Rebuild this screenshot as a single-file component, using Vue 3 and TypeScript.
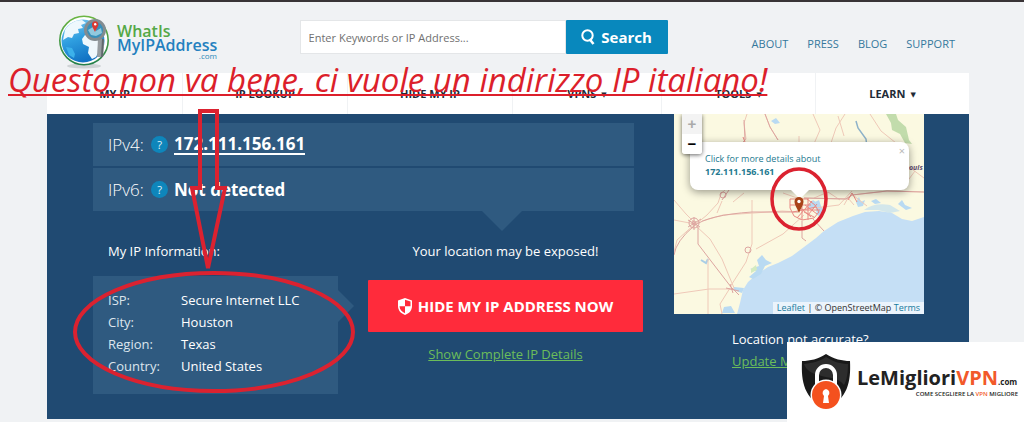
<script setup lang="ts">
interface NavItem { label: string; menu: boolean }
interface Detail { term: string; value: string }

const topLinks: string[] = ['About', 'Press', 'Blog', 'Support']
const navItems: NavItem[] = [
  { label: 'My IP', menu: false },
  { label: 'IP Lookup', menu: false },
  { label: 'Hide My IP', menu: false },
  { label: 'VPNs', menu: true },
  { label: 'Tools', menu: true },
  { label: 'Learn', menu: true },
]
const details: Detail[] = [
  { term: 'ISP:', value: 'Secure Internet LLC' },
  { term: 'City:', value: 'Houston' },
  { term: 'Region:', value: 'Texas' },
  { term: 'Country:', value: 'United States' },
]
const address = '172.111.156.161'
</script>

<template>
  <div class="page">
    <header class="header">
      <a href="#" class="logo" aria-label="WhatIsMyIPAddress.com">
        <svg class="globe" viewBox="0 0 54 54" aria-hidden="true">
          <defs>
            <linearGradient id="ocean" x1="0" y1="0" x2="0.4" y2="1">
              <stop offset="0" stop-color="#8fd0f2" />
              <stop offset="0.5" stop-color="#2f9fe0" />
              <stop offset="1" stop-color="#1273c4" />
            </linearGradient>
            <linearGradient id="ring" x1="0" y1="0" x2="0" y2="1">
              <stop offset="0" stop-color="#6cb644" />
              <stop offset="1" stop-color="#23804a" />
            </linearGradient>
          </defs>
          <ellipse cx="26" cy="51" rx="17" ry="2.5" fill="#cfd3d5" />
          <circle cx="26" cy="25.500" r="24.200" fill="#fff" stroke="url(#ring)" stroke-width="1.600" />
          <circle cx="25" cy="26" r="21.500" fill="url(#ocean)" />
          <path d="M7 15 C11 8 18 5 24 5 L28 8 23 10 25 13 20 14 21 18 16 19 14 23 10 22 5 25Z" fill="#eef8fd" />
          <path d="M27 20 L34 22 45 26 46 32 41 36 38 42 34 44 30 38 31 32 25 29 24 24Z" fill="#eef8fd" />
          <path d="M8 32 L14 33 17 39 16 43 11 40Z" fill="#3cb1ea" />
          <path d="M40 24 L46 24 45 42 39 42Z" fill="#969da1" />
          <path d="M44 24 L46 24 45 42 43 42Z" fill="#60686d" />
          <circle cx="37" cy="15" r="9.500" fill="#3790bb" stroke="#838c91" stroke-width="3" />
          <path d="M30 15 L35 12 38 16 43 13 44 18 38 21 33 20Z" fill="#91c9df" />
          <path d="M37 17 C35 13 33.500 11 34 8.500 A3.300 3.300 0 0 1 40.300 8.500 C41 11 38 14 37 17Z" fill="#d93a34" />
          <circle cx="37.200" cy="9.300" r="1.200" fill="#fff" />
        </svg>
        <span class="wordmark">
          <span class="green">WhatIs</span>
          <span class="blue">MyIPAddress</span>
          <span class="com">.com</span>
        </span>
      </a>
      <form class="search" role="search" @submit.prevent>
        <input type="search" aria-label="Enter keywords or IP address" placeholder="Enter Keywords or IP Address..." />
        <button type="submit">
          <svg viewBox="0 0 15 17" aria-hidden="true">
            <circle cx="6.500" cy="6.500" r="5.200" fill="none" stroke="#fff" stroke-width="2" />
            <path d="M8.500 10 L12.500 15" stroke="#fff" stroke-width="2.600" />
          </svg>
          Search
        </button>
      </form>
      <nav class="top-links" aria-label="Company">
        <a v-for="link in topLinks" :key="link" href="#">{{ link }}</a>
      </nav>
    </header>

    <nav class="main-nav" aria-label="Main">
      <a v-for="item in navItems" :key="item.label" href="#">
        {{ item.label }}<span v-if="item.menu" class="caret">▼</span>
      </a>
    </nav>

    <main class="content">
      <section class="info">
        <div class="addresses">
          <div class="address">
            <span class="version">IPv4:</span>
            <button class="help" type="button" aria-label="About IPv4">?</button>
            <a href="#">{{ address }}</a>
          </div>
          <div class="address">
            <span class="version">IPv6:</span>
            <button class="help" type="button" aria-label="About IPv6">?</button>
            <span>Not detected</span>
          </div>
        </div>
        <div class="columns">
          <div class="provider">
            <h2>My IP Information:</h2>
            <dl>
              <template v-for="row in details" :key="row.term">
                <dt>{{ row.term }}</dt>
                <dd>{{ row.value }}</dd>
              </template>
            </dl>
          </div>
          <div class="exposure">
            <p>Your location may be exposed!</p>
            <button class="hide" type="button">
              <svg viewBox="0 0 14 17" aria-hidden="true">
                <path d="M7 0 L14 2.500 V8 C14 12.500 11 15.500 7 17 C3 15.500 0 12.500 0 8 V2.500Z" fill="#fff" />
                <path d="M7 1.800 L12.500 3.600 V8.300 H7Z M7 8.300 V15.300 C4 14 1.700 11.800 1.500 8.300Z" fill="#ff2b3b" />
              </svg>
              HIDE MY IP ADDRESS NOW
            </button>
            <a href="#" class="green-link">Show Complete IP Details</a>
          </div>
        </div>
      </section>

      <section class="location">
        <div class="map">
          <svg class="tiles" viewBox="0 0 250 200" preserveAspectRatio="xMidYMid slice" aria-hidden="true">
            <rect width="250" height="200" fill="#fbf9e1" />
            <path d="M212 0 L222 0 224 6 232 13 235 26 238 30 231 29 226 20 218 16 217 9Z" fill="#c2dcac" />
            <path d="M63 200 L66 189 69 176 74 168 82 161 94 153 104 149 118 142 134 130 142 124 150 117 164 108 179 102 191 98 205 97 218 99 228 105 238 107 250 103 V200Z" fill="#c5dff5" />
            <g fill="#b9daf2">
              <path d="M190 96 Q200 88 216 91 L226 97 216 99 204 96Z" opacity="0.600" />
              <path d="M182 88 l3-5 2 5 4-2-2 6-5 1z M197 87 l5-2 5 4-6 1z M224 90 l4-4 3 5 7 3-6 2z M134 91 l5-5 4 3-3 6-5-1z" />
              <path d="M141 88 l4-2 2 6 3 5-2 6-5-2z" />
              <path d="M88 141 l4 5 6 3-7 3-4 8-8 5-4-2 7-6-6-2 9-3-2-6z M60 173 l10 1-2 5-9-3z M50 193 l7-1 4 7H48z M97 7l5-3 4 5-5 1z" />
              <path d="M182 7 l2 7 8 11 1 9" fill="none" stroke="#8eb2c9" stroke-width="1.500" />
              <path d="M27 146l5 3 2-4" fill="none" stroke="#a9cee6" stroke-width="2" />
            </g>
            <path d="M77 155 l5-4 1 5-6 3z" fill="#d4ebc0" />
            <g fill="none" stroke="#efc9b8" stroke-width="1">
              <path d="M73 0 L70 9 72 25 68 30 M91 0 L96 13 104 26 M139 0 L146 16 139 32 M171 0 L162 14 157 29 M196 0 L207 17 222 29 M125 22V31 M164 2L170 22" />
              <path d="M0 86 L12 100 22 110 33 101 44 89 47 80 52 75 M28 107 L49 101 80 99 108 97 124 98 M22 112 L36 125 48 145 60 174 M78 86V130L72 148 56 173 M82 135L109 120 130 101 M22 109 L3 126 0 138 M34 145V200 M0 180 L35 175 60 175 M48 87 L43 99 M59 88L70 79 M0 106L21 110" />
              <path d="M126 85 L109 79 M130 84 L172 85 178 81 213 77 250 78 M141 94 L165 91 178 77 M180 82L193 92 M170 91 L174 84 180 91M56 174L46 190 48 200M231 50L250 64 M232 69L241 57 M140 84 L154 78 166 86" />
            </g>
            <g fill="none" stroke="#dda5a0" stroke-width="1">
              <path d="M0 141 Q2 127 20 112 Q34 101 78 98 L124 98 M24 113V130L37 147 57 173 65 181 M70 6L71 26 66 31 M91 0L96 13 104 26 M55 76L48 86 M130 84L172 85 178 81 213 77 250 78 M139 105L150 117M128 107V124l4 3" />
              <circle cx="20" cy="109" r="5" /><circle cx="20" cy="109" r="2" />
              <circle cx="49" cy="81" r="3" /><circle cx="74" cy="136" r="3" />
              <path d="M14 106l12 7M14 113l13-8M20 103v13M52 174l13 3M56 170l3 9" />
            </g>
            <g fill="none" stroke="#e98983" stroke-width="1">
              <path d="M116 85h17l8 6 4 7-5 6-12 2-8-4-4-8zM119 98l23-5M128 86v20M121 89l16 14M138 87l-15 17M127 96h19M116 91h21M130 98l10 5M131 91l12 9M134 84v22M143 90l-9 11" />
              <path d="M66 29h8v3h-9zM69 23l4 10M174 86l4-7 5 9" />
            </g>
            <text x="235" y="56" class="map-label">ouis</text>
          </svg>
          <div class="popup">
            <button type="button" aria-label="Close popup">×</button>
            <a href="#">Click for more details about<strong>{{ address }}</strong></a>
          </div>
          <svg class="pin" viewBox="0 0 60 66" aria-hidden="true">
            <path d="M30 47 C28 42 25.500 39 25.500 35.500 a4.500 4.500 0 0 1 9 0 C34.500 39 32 42 30 47Z" fill="#a94418" />
            <circle cx="30" cy="35.500" r="1.700" fill="#fff" />
            <ellipse cx="30" cy="33" rx="27" ry="30" fill="none" stroke="#db2230" stroke-width="3.500" />
          </svg>
          <div class="zoom">
            <button type="button" aria-label="Zoom in" disabled>+</button>
            <button type="button" aria-label="Zoom out">−</button>
          </div>
          <div class="credit"><a href="#">Leaflet</a> | © OpenStreetMap <a href="#">Terms</a></div>
        </div>
        <div class="accuracy">
          <p>Location not accurate?</p>
          <a href="#" class="green-link">Update My IP Location</a>
        </div>
      </section>
    </main>

    <p class="note">Questo non va bene, ci vuole un indirizzo IP italiano!</p>
    <svg class="marks" viewBox="0 0 360 400" aria-hidden="true">
      <path d="M200 111 H217 V188 H225 L208 268 L192 188 H200Z" />
      <ellipse cx="214" cy="332" rx="139" ry="59" />
    </svg>

    <aside class="sponsor">
      <svg class="shield" viewBox="0 0 50 58" aria-hidden="true">
        <path d="M25 1 C33 6 41 8 49 8 C50 29 47 45 25 57 C3 45 0 29 1 8 C9 8 17 6 25 1Z" fill="#191919" />
        <path d="M25 4 C33 9 40 11 47 11 C47 19 46 27 43 32 C37 24 30 26 17 22 C10 20 5 17 3 11 C12 10 19 8 25 4Z" fill="#2d2d2d" />
        <path d="M16 35 V22 a9 9 0 0 1 18 0 V35" fill="none" stroke="#fff" stroke-width="4" />
        <circle cx="25" cy="42" r="15.500" fill="#fff" />
        <circle cx="25" cy="42" r="14" fill="#f4511e" />
        <path d="M25 36 a4 4 0 0 1 2 7 L28 50 H22 L23 43 a4 4 0 0 1 2-7Z" fill="#fff" />
      </svg>
      <div class="sponsor-text">
        <div class="sponsor-name">LeMigliori<span class="orange">VPN</span><small>.com</small></div>
        <div class="tagline">COME SCEGLIERE LA <span class="orange">VPN</span> MIGLIORE</div>
      </div>
    </aside>
  </div>
</template>

<style>
body {
  margin: 0;
  background: #f0f2f4;
}
</style>

<style scoped>
* {
  box-sizing: border-box;
}
.page {
  position: relative;
  overflow: hidden;
  padding: 0 55px 3px 47px;
  border-top: 2px solid #393436;
  background: #f0f2f4;
  color: #fff;
  font: 13px/22px "Open Sans", "Noto Sans", sans-serif;
}
a {
  color: inherit;
  text-decoration: none;
}
button,
input {
  margin: 0;
  border: 0;
  font: inherit;
}
p,
h2,
dl,
dd {
  margin: 0;
}
.header {
  display: flex;
  align-items: flex-start;
  height: 71px;
  padding: 0 14px 0 11px;
}
.logo {
  display: flex;
  flex: 1;
  padding-top: 13px;
}
.globe {
  width: 54px;
  height: 54px;
  margin-right: 5px;
}
.wordmark {
  display: flex;
  flex-direction: column;
  width: 100px;
  padding-top: 9px;
  font: 600 16px/14px "Open Sans", sans-serif;
}
.green {
  color: #55a846;
}
.blue {
  color: #2380bf;
}
.com {
  align-self: flex-end;
  color: #2b8ab9;
  font-size: 8px;
  font-weight: 400;
  line-height: 8px;
}
.search {
  display: flex;
  width: 368px;
  margin: 18px 84px 0 0;
}
.search input {
  flex: 1;
  min-width: 0;
  height: 34px;
  padding: 0 8px;
  border: 1px solid #e4e6e8;
  background: #fff;
  color: #555;
  font-size: 11px;
}
.search input::placeholder {
  color: #707070;
}
.search button {
  display: flex;
  align-items: center;
  justify-content: center;
  gap: 5px;
  width: 102px;
  height: 34px;
  border-radius: 1px;
  background: #0888bd;
  color: #fff;
  font-size: 15px;
  font-weight: 700;
}
.search svg {
  width: 15px;
  height: 17px;
}
.top-links {
  display: flex;
  gap: 19px;
  padding-top: 31px;
  color: #35789c;
  font-size: 11px;
  font-weight: 500;
  text-transform: uppercase;
}
.main-nav {
  display: grid;
  grid-template-columns: 135fr 165fr 165fr 149fr 154fr 154fr;
  height: 41px;
  background: #fff;
  color: #222a36;
  font-size: 11px;
  font-weight: 700;
  line-height: 41px;
  text-align: center;
  text-transform: uppercase;
}
.main-nav a + a {
  border-left: 1px solid #f0f2f4;
}
.caret {
  margin-left: 5px;
  font: 7px "DejaVu Sans", sans-serif;
  vertical-align: 1px;
}
.content {
  display: grid;
  grid-template-columns: minmax(0, 1fr) 250px;
  gap: 31px;
  min-height: 305px;
  padding: 0 45px 24px 46px;
  background: #204a72;
}
.info {
  padding-top: 9px;
}
.addresses {
  position: relative;
  display: grid;
  gap: 2px;
  margin-right: 9px;
}
.addresses::after {
  position: absolute;
  top: 100%;
  right: 112px;
  border: solid transparent;
  border-width: 20px 20px 0;
  border-top-color: #2f5a80;
  content: "";
}
.address {
  display: flex;
  align-items: center;
  height: 43px;
  padding-left: 15px;
  background: #2f5a80;
  font-size: 17px;
  font-weight: 700;
}
.address a {
  border-bottom: 2px solid #fff;
  line-height: 19px;
}
.version {
  width: 43px;
  font-size: 17px;
  font-weight: 300;
}
.help {
  width: 17px;
  height: 17px;
  margin-right: 6px;
  padding: 0;
  border-radius: 50%;
  background: #0e86bb;
  color: #e3f3fa;
  font-size: 11px;
  font-weight: 400;
  line-height: 17px;
}
.columns {
  display: grid;
  grid-template-columns: minmax(0, 1fr) 275px;
  gap: 30px;
  padding-top: 29px;
}
.provider h2 {
  padding-left: 15px;
  font-size: 13px;
  font-weight: 400;
}
.provider dl {
  position: relative;
  display: grid;
  grid-template-columns: 73px 1fr;
  margin-top: 14px;
  padding: 13px 15px 17px;
  background: #2f5a80;
}
.provider dl::after {
  position: absolute;
  top: 14px;
  left: 100%;
  border: solid transparent;
  border-width: 16px 0 16px 16px;
  border-left-color: #2f5a80;
  content: "";
}
dt {
  color: #dce5ed;
}
.exposure {
  display: flex;
  flex-direction: column;
  align-items: center;
}
.hide {
  display: flex;
  align-items: center;
  justify-content: center;
  gap: 6px;
  width: 100%;
  height: 52px;
  margin: 18px 0 11px;
  border-radius: 1px;
  background: #ff2b3b;
  color: #fff;
  font-size: 15px;
  font-weight: 700;
}
.hide svg {
  width: 14px;
  height: 17px;
}
.green-link {
  color: #6cbd5a;
  text-decoration: underline;
}
.map {
  position: relative;
  height: 200px;
  overflow: hidden;
}
.tiles {
  display: block;
  width: 100%;
  height: 100%;
}
.map-label {
  fill: #604c70;
  font: italic 700 7px "Open Sans", sans-serif;
}
.popup {
  position: absolute;
  top: 28px;
  left: 16px;
  width: 219px;
  height: 48px;
  padding: 10px 15px;
  border-radius: 8px;
  background: #fff;
  box-shadow: 0 2px 8px rgb(0 0 0 / 40%);
  color: #23798f;
  font-size: 9px;
  line-height: 13px;
}
.popup::after {
  position: absolute;
  top: 100%;
  left: 101px;
  border: solid transparent;
  border-width: 9px 9px 0;
  border-top-color: #fff;
  content: "";
}
.popup strong {
  display: block;
}
.popup button {
  position: absolute;
  top: 2px;
  right: 4px;
  padding: 0;
  background: none;
  color: #b9b9b9;
  font-size: 11px;
}
.pin {
  position: absolute;
  top: 52px;
  left: 95px;
  width: 60px;
  height: 66px;
}
.zoom {
  position: absolute;
  top: 0;
  left: 8px;
  display: grid;
  width: 20px;
  border-radius: 0 0 3px 3px;
  box-shadow: 0 1px 4px rgb(0 0 0 / 60%);
}
.zoom button {
  height: 20px;
  padding: 0;
  background: #fff;
  color: #000;
  font: 700 15px/18px "Liberation Sans", sans-serif;
}
.zoom button:first-child {
  background: #f3f3f3;
  color: #aaa;
}
.zoom button:last-child {
  border-radius: 0 0 3px 3px;
}
.credit {
  position: absolute;
  right: 0;
  bottom: 0;
  padding: 0 4px;
  background: rgb(255 255 255 / 65%);
  color: #333;
  font-size: 9px;
  line-height: 12px;
}
.credit a {
  color: #187b9e;
}
.accuracy {
  padding: 14px 0 0 58px;
}
.note {
  position: absolute;
  top: 57px;
  left: 8px;
  color: #dc1f2b;
  font: italic 500 33px/42px "Segoe Print", "Open Sans", sans-serif;
  text-decoration: underline 2px;
  text-decoration-skip-ink: none;
  text-underline-offset: 2px;
  white-space: nowrap;
}
.marks {
  position: absolute;
  top: -2px;
  left: 0;
  width: 360px;
  height: 400px;
  fill: none;
  stroke: #db2230;
  stroke-width: 4px;
  pointer-events: none;
}
.sponsor {
  position: absolute;
  right: 0;
  bottom: 0;
  display: flex;
  align-items: flex-start;
  width: 237px;
  height: 80px;
  padding: 11px 6px 0 14px;
  background: #fff;
  color: #222;
}
.shield {
  flex: none;
  width: 50px;
  height: 58px;
}
.sponsor-text {
  flex: 1;
  padding: 18px 0 0 6px;
  white-space: nowrap;
}
.sponsor-name {
  font: 700 20px/14px "Open Sans", sans-serif;
}
.sponsor-name small {
  font-size: 8px;
}
.tagline {
  font: 600 6px/10px "Open Sans", sans-serif;
  text-align: right;
}
.orange {
  color: #f2592a;
}
</style>
